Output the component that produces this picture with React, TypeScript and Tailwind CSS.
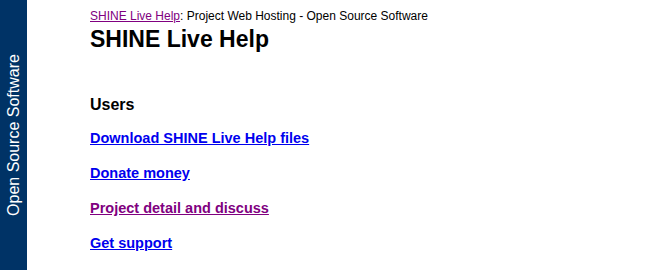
import React from "react";

export default function App() {
  const font = { fontFamily: '"Liberation Sans", Arial, sans-serif' };
  return (
    <div className="flex w-[650px] h-[270px] bg-white overflow-hidden" style={font}>
      <div className="w-[27px] h-[270px] bg-[#003366] flex items-center justify-center shrink-0">
        <div className="-rotate-90 whitespace-nowrap text-white text-[16px] leading-none">
          Open Source Software
        </div>
      </div>
      <div className="pl-[63px] pt-[9px] flex flex-col">
        <div className="text-[12px] leading-[15px] text-black">
          <a href="#" className="text-[#800080] underline">SHINE Live Help</a>: Project Web Hosting - Open Source Software
        </div>
        <h1 className="text-[23px] font-bold leading-[28px] text-black mt-[1px]">SHINE Live Help</h1>
        <h2 className="text-[16px] font-bold leading-[19px] text-black mt-[42px]">Users</h2>
        <div className="flex flex-col gap-[18px] mt-[16px] text-[14.5px] font-bold leading-[17px]">
          <a href="#" className="text-[#0000ee] underline">Download SHINE Live Help files</a>
          <a href="#" className="text-[#0000ee] underline">Donate money</a>
          <a href="#" className="text-[#800080] underline">Project detail and discuss</a>
          <a href="#" className="text-[#0000ee] underline">Get support</a>
        </div>
      </div>
    </div>
  );
}
